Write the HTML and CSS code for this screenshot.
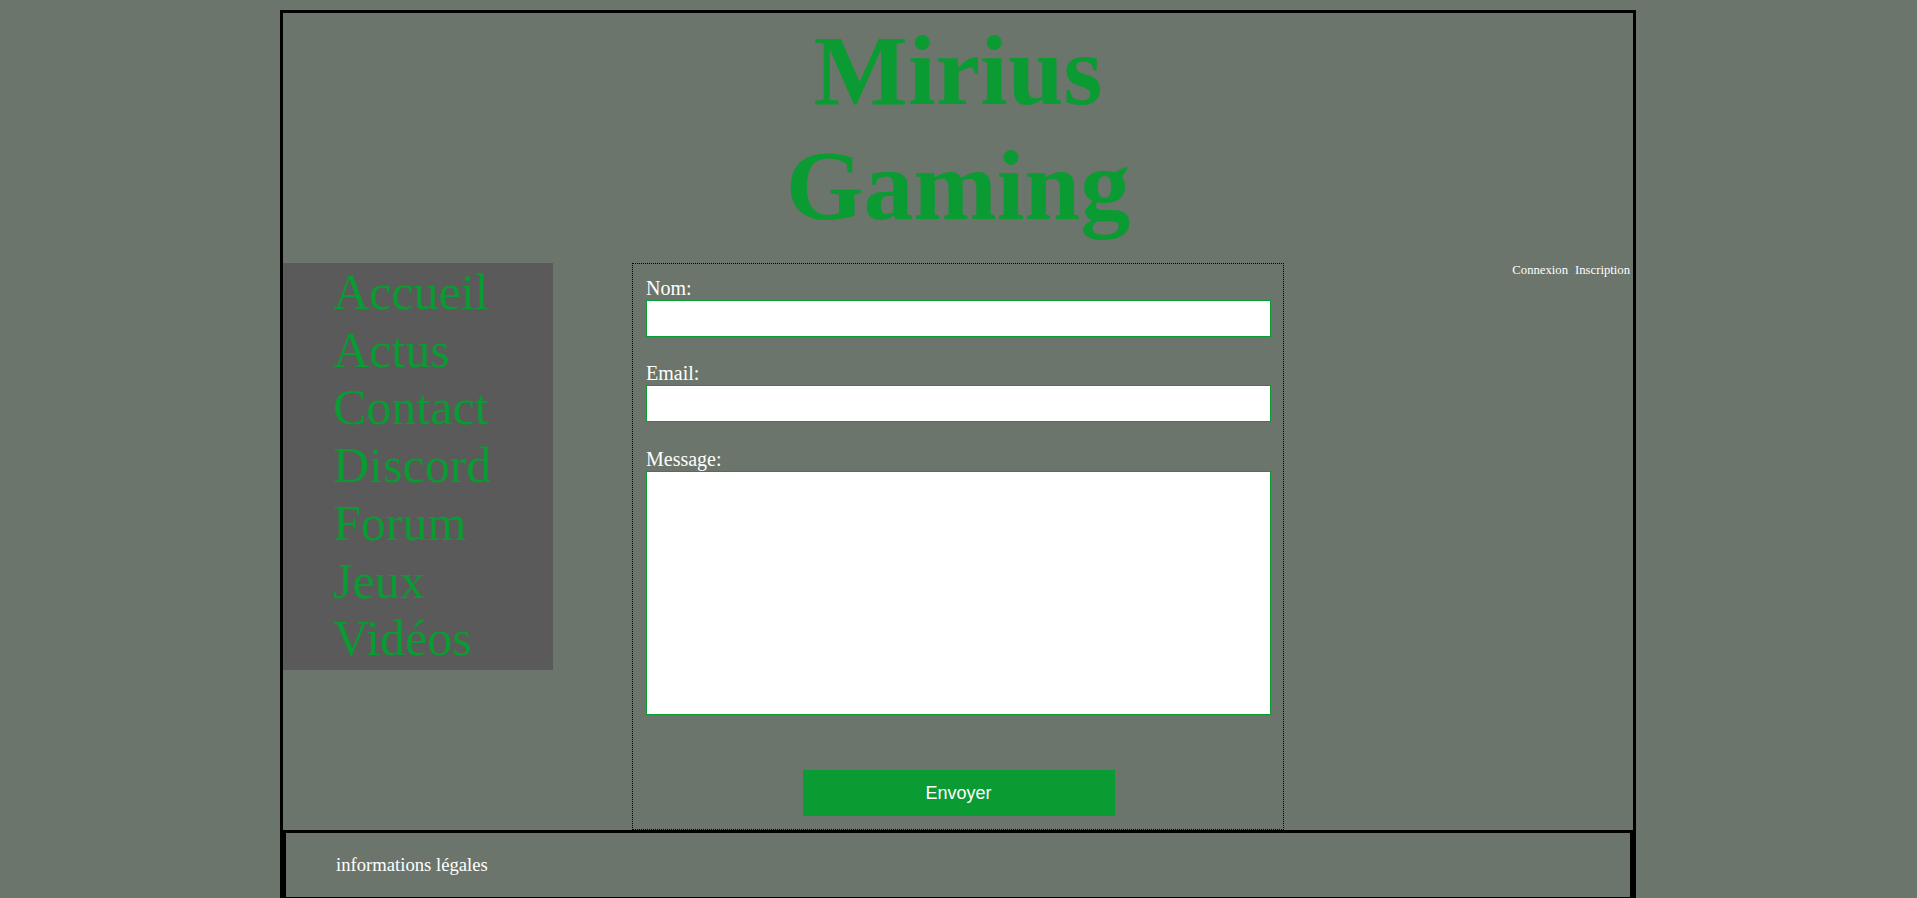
FILE: index.html
```html
<!DOCTYPE html>
<html lang="fr">
<head>
<meta charset="utf-8">
<title>Mirius Gaming - Contact</title>
<link rel="stylesheet" href="styles.css">
</head>
<body>
<div class="page">
  <header class="header">
    <h1 class="title">Mirius Gaming</h1>
  </header>
  <div class="main">
    <nav class="nav">
      <ul class="nav-list">
        <li><a href="#">Accueil</a></li>
        <li><a href="#">Actus</a></li>
        <li><a href="#">Contact</a></li>
        <li><a href="#">Discord</a></li>
        <li><a href="#">Forum</a></li>
        <li><a href="#">Jeux</a></li>
        <li><a href="#">Vidéos</a></li>
      </ul>
    </nav>
    <form class="contact-form">
      <label class="label" for="nom">Nom:</label>
      <input class="field" id="nom" type="text">
      <label class="label label-gap" for="email">Email:</label>
      <input class="field" id="email" type="email">
      <label class="label label-gap label-msg" for="message">Message:</label>
      <textarea class="field area" id="message"></textarea>
      <div class="actions">
        <button class="submit" type="button">Envoyer</button>
      </div>
    </form>
    <aside class="account">
      <a href="#">Connexion</a>
      <a href="#">Inscription</a>
    </aside>
  </div>
  <footer class="footer">
    <p class="footer-text">informations légales</p>
  </footer>
</div>
</body>
</html>
```
FILE: styles.css
```css
html, body {
  background: #6b756b;
}
body {
  margin: 8px;
  font-family: "Liberation Serif", "Times New Roman", serif;
  color: #ffffff;
}
.page {
  width: 1350px;
  margin: 2px 0 0 calc((100% - 1357px) / 2);
  border: 3px solid #000000;
  background: #6b756b;
}
.header {
  display: flex;
  justify-content: center;
}
.title {
  width: 652px;
  margin: 0 0 20px;
  font-size: 100px;
  line-height: 115px;
  font-weight: bold;
  color: #0a9b32;
  text-align: center;
}
.main {
  display: flex;
  align-items: flex-start;
}
.nav {
  width: 270px;
  flex: none;
  background: #5a5a5a;
  padding: 1px 0 2px 50px;
  box-sizing: border-box;
}
.nav-list {
  list-style: none;
  margin: 0;
  padding: 0;
}
.nav-list a {
  font-size: 50px;
  line-height: 57.7px;
  color: #0a9b32;
  text-decoration: none;
  display: block;
}
.contact-form {
  width: 652px;
  flex: none;
  margin-left: 79px;
  box-sizing: border-box;
  border: 1px dotted #000000;
  padding: 13px 12px 13px 13px;
  display: flex;
  flex-direction: column;
}
.label {
  display: block;
  font-size: 20px;
  line-height: 23px;
  color: #ffffff;
}
.label-gap {
  margin-top: 25px;
}
.label-msg {
  margin-top: 26px;
}
.field {
  display: block;
  width: 625px;
  height: 37px;
  box-sizing: border-box;
  margin: 0;
  border: 1px solid #0a9b32;
  background: #ffffff;
  border-radius: 0;
  padding: 2px 4px;
  font-family: "Liberation Sans", Arial, sans-serif;
  font-size: 16px;
  outline: none;
}
.area {
  height: 244px;
  resize: none;
}
.actions {
  display: flex;
  justify-content: center;
  margin-top: 55px;
}
.submit {
  width: 312px;
  height: 46px;
  border: none;
  border-radius: 0;
  background: #0a9b32;
  color: #ffffff;
  font-family: "Liberation Sans", Arial, sans-serif;
  font-size: 18px;
  padding: 0;
  cursor: pointer;
}
.account {
  flex: 1;
  display: flex;
  justify-content: flex-end;
  gap: 7px;
  padding-right: 3px;
  font-size: 12.7px;
  line-height: 14px;
}
.account a {
  color: #ffffff;
  text-decoration: none;
}
.footer {
  border: 3px solid #000000;
  padding: 21px 0 21px 50px;
}
.footer-text {
  margin: 0;
  font-size: 18.67px;
  line-height: 21.5px;
  color: #ffffff;
}
```
